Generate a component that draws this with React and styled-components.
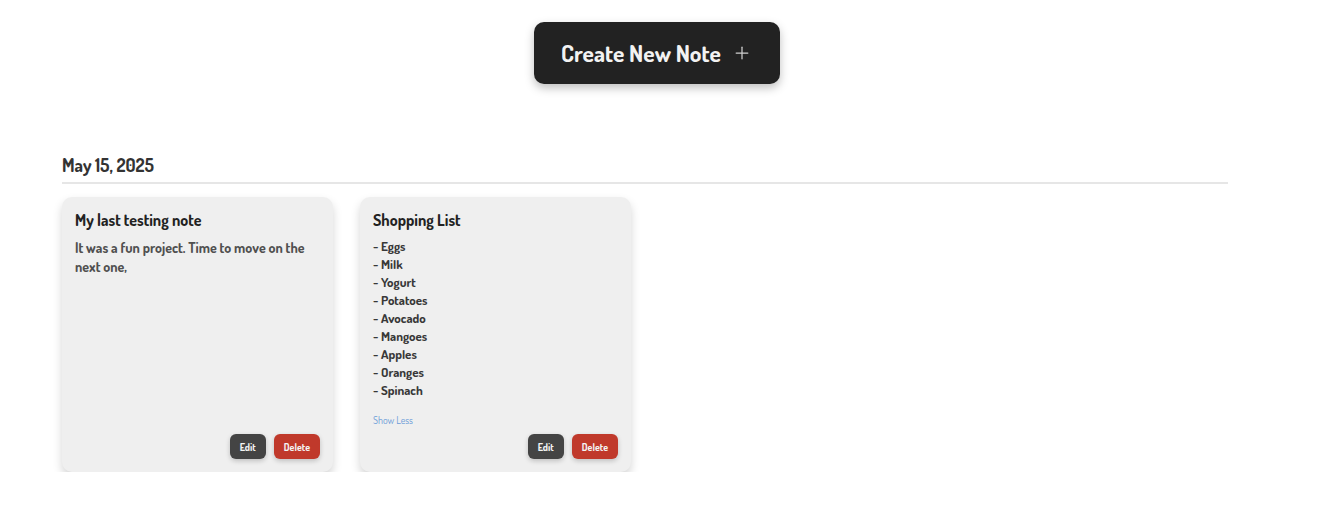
import styled, { createGlobalStyle } from 'styled-components';
import { Plus } from 'lucide-react';

const GlobalStyle = createGlobalStyle`
  body {
    margin: 0;
    background: #fff;
    font-family: "Dosis", "DejaVu Sans Condensed", "Liberation Sans Narrow", "Roboto", sans-serif;
  }
`;

const Page = styled.main`
  display: flex;
  flex-direction: column;
  align-items: center;
  padding-top: 22px;
`;

const CreateButton = styled.button`
  display: flex;
  align-items: center;
  gap: 11px;
  height: 62px;
  margin-right: 8px;
  padding: 0 28px 0 27px;
  border: none;
  border-radius: 10px;
  background: #222;
  color: #f2f2f2;
  font-family: inherit;
  font-size: 23.5px;
  font-weight: 700;
  box-shadow: 0 4px 10px rgba(0, 0, 0, 0.25);
  cursor: pointer;
  & > svg {
    color: #cfcfcf;
  }
`;

const Notes = styled.section`
  align-self: flex-start;
  width: 1166px;
  margin: 70px 0 0 62px;
`;

const DateHeading = styled.h2`
  margin: 0;
  padding-bottom: 6px;
  border-bottom: 2px solid #e6e6e6;
  color: #333;
  font-size: 18px;
  font-weight: 700;
`;

const Grid = styled.div`
  display: grid;
  grid-template-columns: repeat(auto-fill, 271px);
  column-gap: 27px;
  margin-top: 13px;
`;

const Card = styled.article`
  display: flex;
  flex-direction: column;
  padding: 13px 13px 13px;
  border-radius: 10px;
  background: #efefef;
  box-shadow: 0 5px 10px rgba(0, 0, 0, 0.17);
`;

const CardTitle = styled.h3`
  margin: 0 0 7px;
  color: #222;
  font-size: 16px;
  font-weight: 700;
`;

const CardBody = styled.p`
  margin: ${({ $list }) => ($list ? '0' : '1px 0 0')};
  color: ${({ $list }) => ($list ? '#383838' : '#505050')};
  font-size: ${({ $list }) => ($list ? '13px' : '14px')};
  font-weight: 700;
  line-height: ${({ $list }) => ($list ? '18px' : '19px')};
  white-space: pre-line;
`;

const ShowLess = styled.button`
  align-self: flex-start;
  margin-top: 15px;
  padding: 0;
  border: none;
  background: none;
  color: #6a9bd8;
  font-family: inherit;
  font-size: 10px;
  cursor: pointer;
`;

const Actions = styled.div`
  display: flex;
  justify-content: flex-end;
  gap: 8px;
  margin-top: auto;
  padding-top: 8px;
`;

const ActionButton = styled.button`
  height: 25px;
  padding: 0 10px;
  border: none;
  border-radius: 6px;
  background: ${({ $danger }) => ($danger ? '#c0392b' : '#444')};
  color: #f4f4f4;
  font-family: inherit;
  font-size: 10px;
  font-weight: 700;
  box-shadow: 0 2px 5px rgba(0, 0, 0, 0.2);
  cursor: pointer;
`;

const notes = [
  {
    id: 1,
    title: 'My last testing note',
    body: 'It was a fun project. Time to move on the next one,',
  },
  {
    id: 2,
    title: 'Shopping List',
    body: '- Eggs\n- Milk\n- Yogurt\n- Potatoes\n- Avocado\n- Mangoes\n- Apples\n- Oranges\n- Spinach',
    list: true,
  },
];

export default function App() {
  return (
    <>
      <GlobalStyle />
      <Page>
        <CreateButton>
          Create New Note
          <Plus size={20} strokeWidth={1.5} />
        </CreateButton>
        <Notes>
          <DateHeading>May 15, 2025</DateHeading>
          <Grid>
            {notes.map((note) => (
              <Card key={note.id}>
                <CardTitle>{note.title}</CardTitle>
                <CardBody $list={note.list}>{note.body}</CardBody>
                {note.list && <ShowLess>Show Less</ShowLess>}
                <Actions>
                  <ActionButton>Edit</ActionButton>
                  <ActionButton $danger>Delete</ActionButton>
                </Actions>
              </Card>
            ))}
          </Grid>
        </Notes>
      </Page>
    </>
  );
}
